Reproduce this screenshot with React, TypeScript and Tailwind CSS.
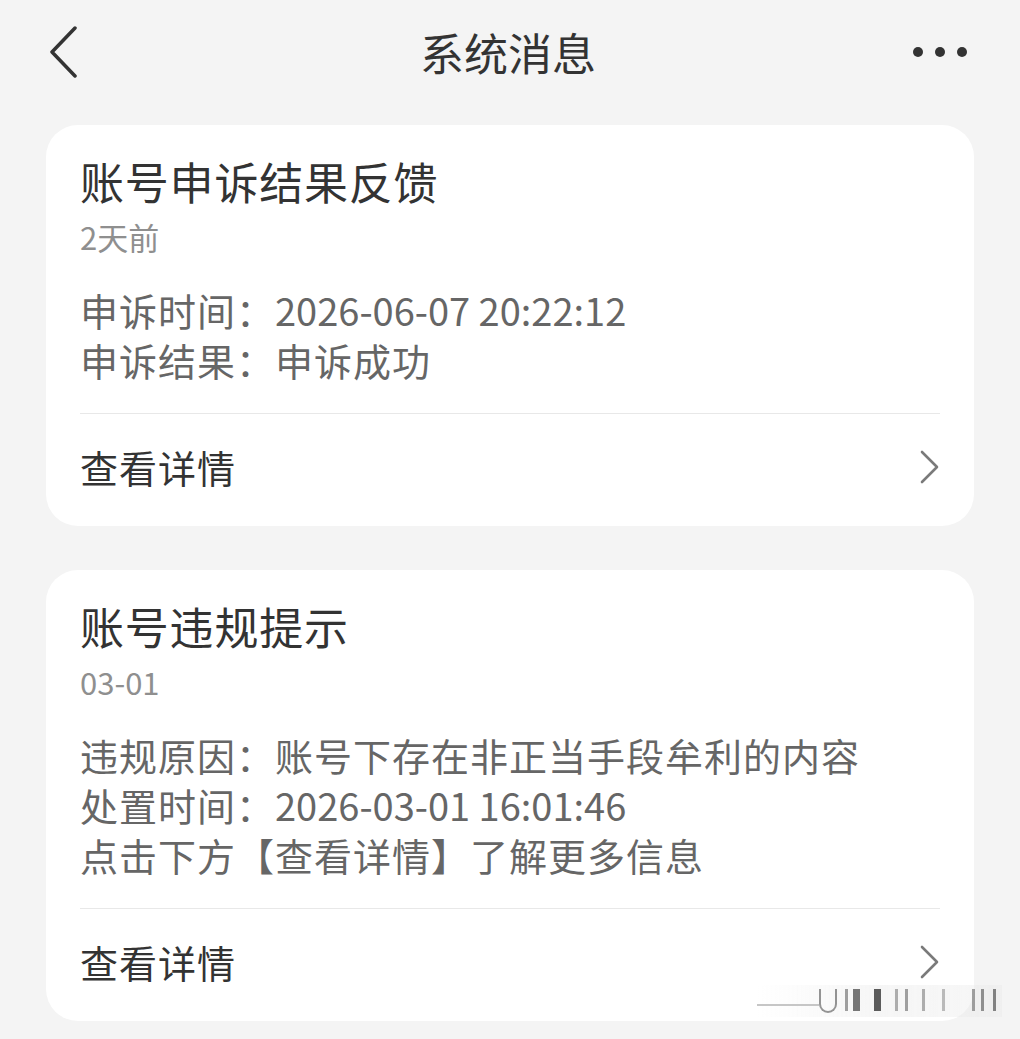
import React from "react";

type Message = {
  title: string;
  time: string;
  lines: React.ReactNode[];
};

const messages: Message[] = [
  {
    title: "账号申诉结果反馈",
    time: "2天前",
    lines: [
      <>
        申诉时间：<span className="tracking-normal">2026-06-07 20:22:12</span>
      </>,
      <>申诉结果：申诉成功</>,
    ],
  },
  {
    title: "账号违规提示",
    time: "03-01",
    lines: [
      <>违规原因：账号下存在非正当手段牟利的内容</>,
      <>
        处置时间：<span className="tracking-normal">2026-03-01 16:01:46</span>
      </>,
      <>点击下方【查看详情】了解更多信息</>,
    ],
  },
];

// smear bars at the bottom right: [width, colour, gap before]
const smear: [string, string, string][] = [
  ["w-[3px]", "bg-[#888]", "ml-[8px]"],
  ["w-[7px]", "bg-[#555]", "ml-[5px]"],
  ["w-[7px]", "bg-[#333]", "ml-[14px]"],
  ["w-[3px]", "bg-[#999]", "ml-[14px]"],
  ["w-[3px]", "bg-[#888]", "ml-[7px]"],
  ["w-[3px]", "bg-[#999]", "ml-[14px]"],
  ["w-[3px]", "bg-[#aaa]", "ml-[17px]"],
  ["w-[3px]", "bg-[#888]", "ml-[27px]"],
  ["w-[3px]", "bg-[#777]", "ml-[6px]"],
  ["w-[3px]", "bg-[#666]", "ml-[9px]"],
];

function BackIcon() {
  return (
    <svg width="28" height="52" viewBox="0 0 28 52" fill="none">
      <polyline
        points="26,2 3,26 26,50"
        stroke="#333"
        strokeWidth="3.5"
        strokeLinecap="round"
        strokeLinejoin="round"
      />
    </svg>
  );
}

function ChevronRight() {
  return (
    <svg width="20" height="34" viewBox="0 0 20 34" fill="none">
      <polyline
        points="2,2 17,17 2,32"
        stroke="#7a7a7a"
        strokeWidth="2.6"
        strokeLinecap="round"
        strokeLinejoin="round"
      />
    </svg>
  );
}

function MessageCard({ msg }: { msg: Message }) {
  return (
    <div className="mx-[46px] rounded-[32px] bg-white px-[34px] pt-[28px]">
      <h2 className="text-[44px] leading-[56px] tracking-[0.8px] text-[#333]">{msg.title}</h2>
      <p className="mt-[8px] text-[31px] leading-[40px] text-[#8f8f8f]">{msg.time}</p>
      <div className="mt-[28px] text-[38px] leading-[50px] tracking-[1px] text-[#666]">
        {msg.lines.map((line, i) => (
          <p key={i} className="whitespace-nowrap">
            {line}
          </p>
        ))}
      </div>
      <div className="mt-[28px] border-t border-[#e8e8e8]" />
      <div className="flex items-center justify-between pt-[28px] pb-[34px]">
        <span className="text-[38px] leading-[50px] tracking-[1px] text-[#333]">查看详情</span>
        <ChevronRight />
      </div>
    </div>
  );
}

export default function App() {
  return (
    <div className="relative min-h-screen bg-[#f4f4f4] pb-[20px] font-['Noto_Sans_CJK_SC','Noto_Sans',sans-serif]">
      <header className="grid h-[104px] grid-cols-[1fr_auto_1fr] items-center pl-[49px] pr-[53px]">
        <BackIcon />
        <h1 className="text-[44px] leading-none text-[#333]">系统消息</h1>
        <div className="flex justify-end gap-[12px]">
          <span className="h-[10px] w-[10px] rounded-full bg-[#333]" />
          <span className="h-[10px] w-[10px] rounded-full bg-[#333]" />
          <span className="h-[10px] w-[10px] rounded-full bg-[#333]" />
        </div>
      </header>

      <main className="mt-[21px] flex flex-col gap-[44px]">
        {messages.map((m) => (
          <MessageCard key={m.title} msg={m} />
        ))}
      </main>

      {/* scan smear over the lower right corner */}
      <div className="pointer-events-none absolute left-[757px] top-[985px] flex h-[32px] w-[245px] items-stretch bg-gradient-to-r from-transparent via-[#ececec]/60 to-[#e6e6e6]/40 py-[4px] opacity-80 blur-[0.6px]">
        <div className="mt-[15px] h-[2px] w-[62px] bg-[#b8b8b8]" />
        <div className="h-[24px] w-[18px] rounded-b-full border-x-2 border-b-2 border-[#444]/70" />
        {smear.map(([w, c, ml], i) => (
          <div key={i} className={`h-[22px] ${w} ${c} ${ml}`} />
        ))}
      </div>
    </div>
  );
}
